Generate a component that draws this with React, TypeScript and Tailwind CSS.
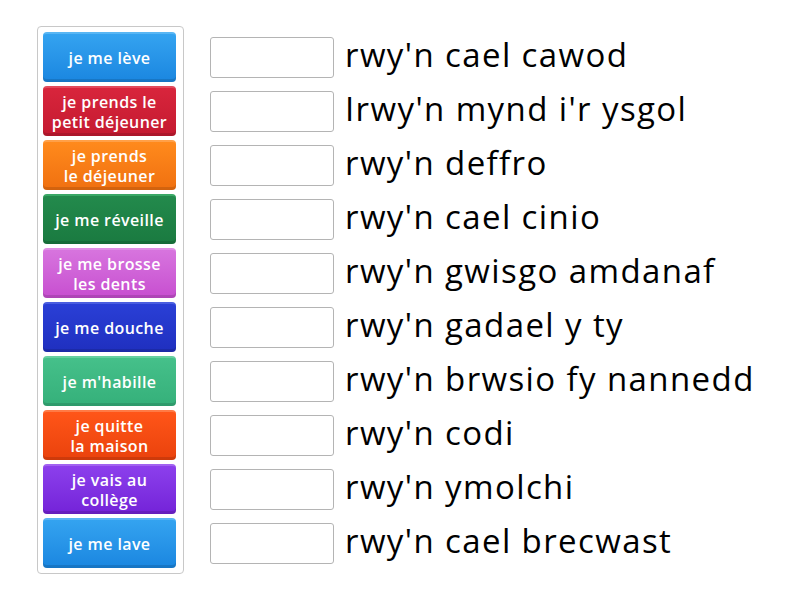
import React from 'react';

const cards = [
  { label: ['je me lève'], bg: 'from-[#34a3f0] to-[#1a86e0]', edge: 'border-[#58b6f4]' },
  { label: ['je prends le', 'petit déjeuner'], bg: 'from-[#d8253c] to-[#c41a30]', edge: 'border-[#e24a5c]' },
  { label: ['je prends', 'le déjeuner'], bg: 'from-[#ff8a1c] to-[#f07010]', edge: 'border-[#ffa048]' },
  { label: ['je me réveille'], bg: 'from-[#238a4c] to-[#1a7a40]', edge: 'border-[#3aa865]' },
  { label: ['je me brosse', 'les dents'], bg: 'from-[#d774de] to-[#c74ed0]', edge: 'border-[#e08ee6]' },
  { label: ['je me douche'], bg: 'from-[#2a3fd6] to-[#1f2fbf]', edge: 'border-[#4a5ee0]' },
  { label: ['je m\'habille'], bg: 'from-[#45c08a] to-[#35b07a]', edge: 'border-[#66cfa0]' },
  { label: ['je quitte', 'la maison'], bg: 'from-[#ff5518] to-[#ea420c]', edge: 'border-[#ff7a45]' },
  { label: ['je vais au', 'collège'], bg: 'from-[#8c3fec] to-[#7422d8]', edge: 'border-[#a262f0]' },
  { label: ['je me lave'], bg: 'from-[#34a3f0] to-[#1a86e0]', edge: 'border-[#58b6f4]' },
];

const answers = [
  "rwy'n cael cawod",
  "Irwy'n mynd i'r ysgol",
  "rwy'n deffro",
  "rwy'n cael cinio",
  "rwy'n gwisgo amdanaf",
  "rwy'n gadael y ty",
  "rwy'n brwsio fy nannedd",
  "rwy'n codi",
  "rwy'n ymolchi",
  "rwy'n cael brecwast",
];

const font = { fontFamily: '"Open Sans", Lato, sans-serif' };

export default function App() {
  return (
    <div className="w-[800px] h-[600px] bg-white flex" style={font}>
      <div className="ml-[37px] mt-[26px] w-[147px] h-[548px] border border-[#c8c8c8] rounded-[4px] px-[5px] pt-[5px] flex flex-col gap-[4px]">
        {cards.map((c, i) => (
          <div
            key={i}
            className={`h-[50px] w-[133px] rounded-[4px] bg-gradient-to-b ${c.bg} border-t-2 ${c.edge} flex flex-col items-center justify-center text-white text-[16px] leading-[20px] font-semibold tracking-[0.4px] shadow-[inset_0_-3px_0_rgba(0,0,0,0.12)]`}
          >
            {c.label.map((l, j) => (
              <span key={j} className="whitespace-nowrap">{l}</span>
            ))}
          </div>
        ))}
      </div>

      <div className="ml-[26px] mt-[32px] flex flex-col gap-[4px]">
        {answers.map((a, i) => (
          <div key={i} className="h-[50px] flex items-center">
            <div className="w-[124px] h-[41px] border border-[#b4b4b4] rounded-[3px] bg-white shrink-0" />
            <span className="ml-[11px] text-[33px] tracking-[1.4px] text-black whitespace-nowrap leading-none pb-[6px]">{a}</span>
          </div>
        ))}
      </div>
    </div>
  );
}
